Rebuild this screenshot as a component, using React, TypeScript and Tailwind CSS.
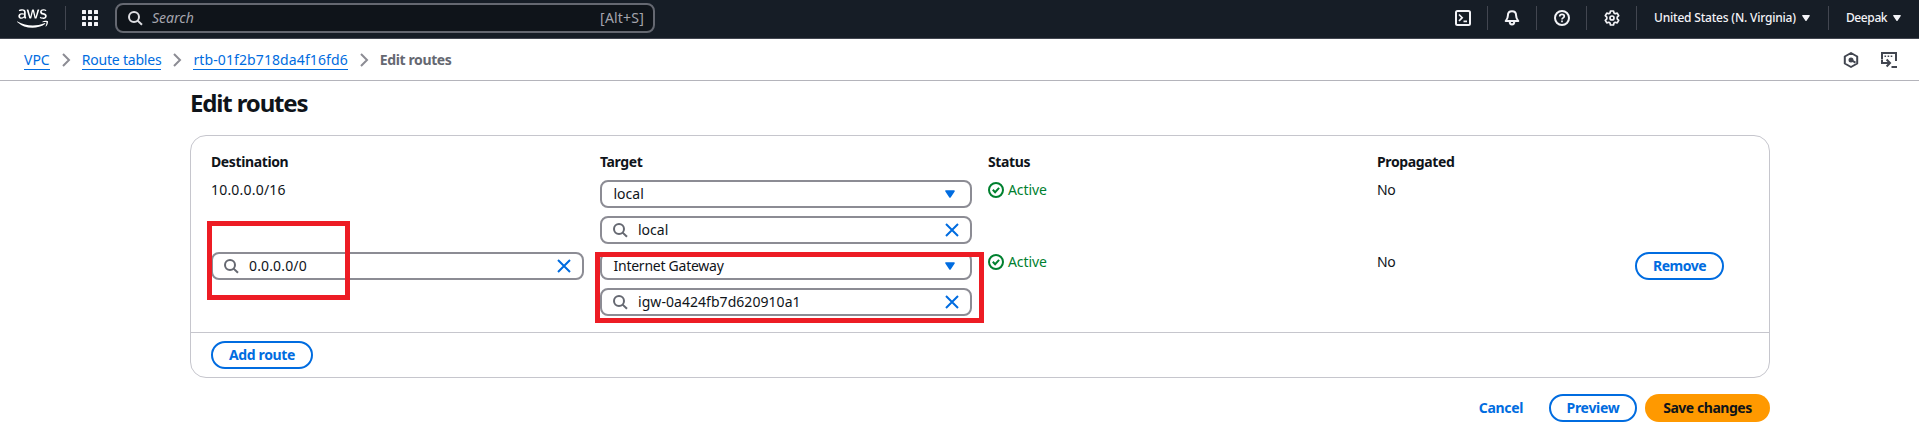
import React from "react";
import { FaAws } from "react-icons/fa";

type IconProps = { className?: string; children: React.ReactNode; stroke?: number };

const Icon = ({ className = "", children, stroke = 2 }: IconProps) => (
  <svg
    viewBox="0 0 16 16"
    className={`h-4 w-4 shrink-0 ${className}`}
    fill="none"
    stroke="currentColor"
    strokeWidth={stroke}
  >
    {children}
  </svg>
);

const SearchIcon = ({ className = "" }: { className?: string }) => (
  <Icon className={className}>
    <circle cx="7" cy="7" r="5" />
    <path d="m10.6 10.6 4.4 4.2" />
  </Icon>
);

const CloseIcon = () => (
  <Icon className="text-[#006ce0]">
    <path d="m2 2 12 12M14 2 2 14" />
  </Icon>
);

const Caret = ({ className = "" }: { className?: string }) => (
  <Icon className={className}>
    <path d="M4 5h8l-4 6z" fill="currentColor" strokeLinejoin="round" strokeWidth="1.6" />
  </Icon>
);

const Chevron = () => (
  <Icon className="mx-2 text-[#8c8c94]">
    <path d="m5 2 6 6-6 6" />
  </Icon>
);

const Separator = () => <div className="h-6 w-px bg-[#424650]" />;

const Crumb = ({ className = "", children }: { className?: string; children: React.ReactNode }) => (
  <a href="#" className={`border-b border-[#006ce0] pt-px leading-[18px] text-[#006ce0] ${className}`}>
    {children}
  </a>
);

const Select = ({ className = "", value }: { className?: string; value: string }) => (
  <div className="flex h-7 items-center justify-between rounded-lg border-2 border-[#8c8c94] bg-white pr-3 pl-[11.5px]">
    <span className={className}>{value}</span>
    <Caret className="text-[#006ce0]" />
  </div>
);

const Field = ({ className = "", value }: { className?: string; value: string }) => (
  <div className="flex h-7 items-center rounded-lg border-2 border-[#8c8c94] bg-white px-2.5">
    <SearchIcon className="text-[#656871]" />
    <span className={`ml-2.5 grow ${className}`}>{value}</span>
    <CloseIcon />
  </div>
);

const Active = () => (
  <div className="flex h-5 items-center gap-1 text-[#00802f]">
    <Icon>
      <circle cx="8" cy="8" r="7" />
      <path d="m4.8 7.8 2.3 2.4 4-4.4" />
    </Icon>
    <span className="tracking-[-0.1px]">Active</span>
  </div>
);

const Button = ({ className = "", children }: { className?: string; children: React.ReactNode }) => (
  <button
    className={`flex h-7 items-center justify-center rounded-full border-2 border-[#006ce0] font-bold whitespace-nowrap text-[#006ce0] ${className}`}
  >
    {children}
  </button>
);

const rowGrid = "grid grid-cols-[373px_372px_373px_242px_auto] gap-x-4";

export default function App() {
  return (
    <div className="relative h-[437px] w-[1919px] overflow-hidden bg-white font-['Noto_Sans',sans-serif] text-[14px] leading-5 text-[#0f141a]">
      <header className="flex h-[39px] items-center border-b border-[#424650] bg-[#161d26] pb-0.5 pl-[17px] text-[#f3f3f7]">
        <FaAws className="h-[25px] w-[31px] text-white" />
        <div className="ml-[17px]">
          <Separator />
        </div>
        <svg viewBox="0 0 16 16" className="ml-4 h-4 w-4" fill="currentColor">
          {[0, 6, 12].map((y) =>
            [0, 6, 12].map((x) => <rect key={`${x}-${y}`} x={x} y={y} width="4" height="4" rx="0.5" />)
          )}
        </svg>
        <div className="ml-[17px] flex h-[30px] w-[540px] items-center rounded-lg border-2 border-[#656871] bg-[#0f141a] pr-[9px] pl-2.5">
          <SearchIcon className="text-[#dedee3]" />
          <span className="ml-[9px] grow text-[#a4a4ad] italic">Search</span>
          <span className="tracking-[0.2px] text-[#a4a4ad]">[Alt+S]</span>
        </div>
        <div className="ml-auto flex items-center">
          <Icon>
            <rect x="1" y="1" width="14" height="14" rx="1.5" />
            <path d="m4 4.5 3.2 3.2L4 11M8.5 11.3H12" strokeWidth="1.7" />
          </Icon>
          <div className="ml-4">
            <Separator />
          </div>
          <Icon className="ml-4">
            <path
              d="M8 1.2c-2.6 0-4.1 1.9-4.1 4.3C3.9 8.4 2.7 9.6 1.7 11h12.6c-1-1.4-2.2-2.6-2.2-5.5 0-2.4-1.5-4.3-4.1-4.3z"
              strokeLinejoin="round"
            />
            <path d="M5.7 11.5c0 2 1 3 2.3 3s2.3-1 2.3-3" />
          </Icon>
          <div className="ml-4">
            <Separator />
          </div>
          <Icon className="ml-[17px]">
            <circle cx="8" cy="8" r="7" />
            <path
              d="M5.7 6.4C5.7 5 6.7 4.3 8 4.3s2.3.8 2.3 2c0 1.5-2.3 1.6-2.3 3.1M8 10.5v1.7"
              strokeWidth="1.7"
            />
          </Icon>
          <div className="ml-4">
            <Separator />
          </div>
          <Icon className="ml-[17px]">
            <path
              d="M6.5 1h3l.5 2 1.2.7 2-.6 1.5 2.6-1.5 1.5v1.6l1.5 1.5-1.5 2.6-2-.6-1.2.7-.5 2h-3L6 13l-1.2-.7-2 .6-1.5-2.6 1.5-1.5V7.2L1.3 5.7l1.5-2.6 2 .6L6 3z"
              strokeLinejoin="round"
              strokeWidth="1.7"
            />
            <circle cx="8" cy="8" r="2" strokeWidth="1.7" />
          </Icon>
          <div className="ml-4">
            <Separator />
          </div>
          <span className="ml-[17px] w-[142px] text-xs font-medium tracking-[-0.2px] whitespace-nowrap">
            United States (N. Virginia)
          </span>
          <Caret className="ml-[2px] scale-80" />
          <div className="ml-[14px]">
            <Separator />
          </div>
          <span className="ml-[17px] w-[41px] text-xs font-medium tracking-[-0.4px]">Deepak</span>
          <Caret className="mr-[14px] ml-[2px] scale-80" />
        </div>
      </header>

      <nav className="flex h-[42px] items-center border-b border-[#b4b4bb] pl-6">
        <Crumb>VPC</Crumb>
        <Chevron />
        <Crumb className="tracking-[-0.2px]">Route tables</Crumb>
        <Chevron />
        <Crumb className="tracking-[0.1px]">rtb-01f2b718da4f16fd6</Crumb>
        <Chevron />
        <span className="font-bold tracking-[-0.38px] text-[#656871]">Edit routes</span>
        <div className="mr-[22px] ml-auto flex gap-[22px] text-[#424650]">
          <Icon>
            <path d="m8 1 6.2 3.5v7L8 15l-6.2-3.5v-7z" strokeLinejoin="round" />
            <path d="m8 8 4.5 2.6" />
            <circle cx="8" cy="8" r="1.5" fill="currentColor" />
          </Icon>
          <Icon>
            <path d="M1 7V1h14v8M10.5 15H16" />
            <path d="M3.5 4.2h1.6M6.6 4.2h1.6M9.7 4.2h1.6" strokeWidth="1.6" />
            <path d="M1 7.5V11h7M5.6 7.5 9 11l-3.4 3.5" />
          </Icon>
        </div>
      </nav>

      <main className="w-[1770px] pl-[190px]">
        <h1 className="pt-[7px] text-2xl leading-[30px] font-bold tracking-[-1.15px]">Edit routes</h1>

        <section className="mt-[17px] rounded-2xl border border-[#c6c6cd]">
          <div className="flex h-[196px] flex-col gap-2 pt-4 pl-5">
            <div className={`${rowGrid} font-bold tracking-[-0.38px]`}>
              <span>Destination</span>
              <span>Target</span>
              <span>Status</span>
              <span>Propagated</span>
            </div>
            <div className={rowGrid}>
              <span className="tracking-[0.2px]">10.0.0.0/16</span>
              <div className="flex flex-col gap-2">
                <Select value="local" />
                <Field value="local" />
              </div>
              <Active />
              <span className="tracking-[-0.5px]">No</span>
            </div>
            <div className={rowGrid}>
              <Field value="0.0.0.0/0" className="tracking-[0.15px]" />
              <div className="flex flex-col gap-2">
                <Select value="Internet Gateway" className="tracking-[-0.25px]" />
                <Field value="igw-0a424fb7d620910a1" className="tracking-[0.05px]" />
              </div>
              <Active />
              <span className="tracking-[-0.5px]">No</span>
              <Button className="w-[89px] tracking-[-0.5px]">Remove</Button>
            </div>
          </div>
          <div className="border-t border-[#c6c6cd] pt-2 pb-2 pl-5">
            <Button className="w-[102px] tracking-[-0.35px]">Add route</Button>
          </div>
        </section>

        <div className="mt-4 flex items-center justify-end">
          <span className="mr-[26px] font-bold tracking-[-0.35px] text-[#006ce0]">Cancel</span>
          <Button className="mr-2 w-[88px] tracking-[-0.3px]">Preview</Button>
          <button className="h-7 w-[125px] rounded-full bg-[#ff9900] font-bold tracking-[-0.45px] whitespace-nowrap">
            Save changes
          </button>
        </div>
      </main>

      <div className="absolute top-[221px] left-[207px] h-[79px] w-[143px] border-5 border-[#ed1c24]" />
      <div className="absolute top-[252px] left-[595px] h-[71px] w-[389px] border-5 border-[#ed1c24]" />
    </div>
  );
}
